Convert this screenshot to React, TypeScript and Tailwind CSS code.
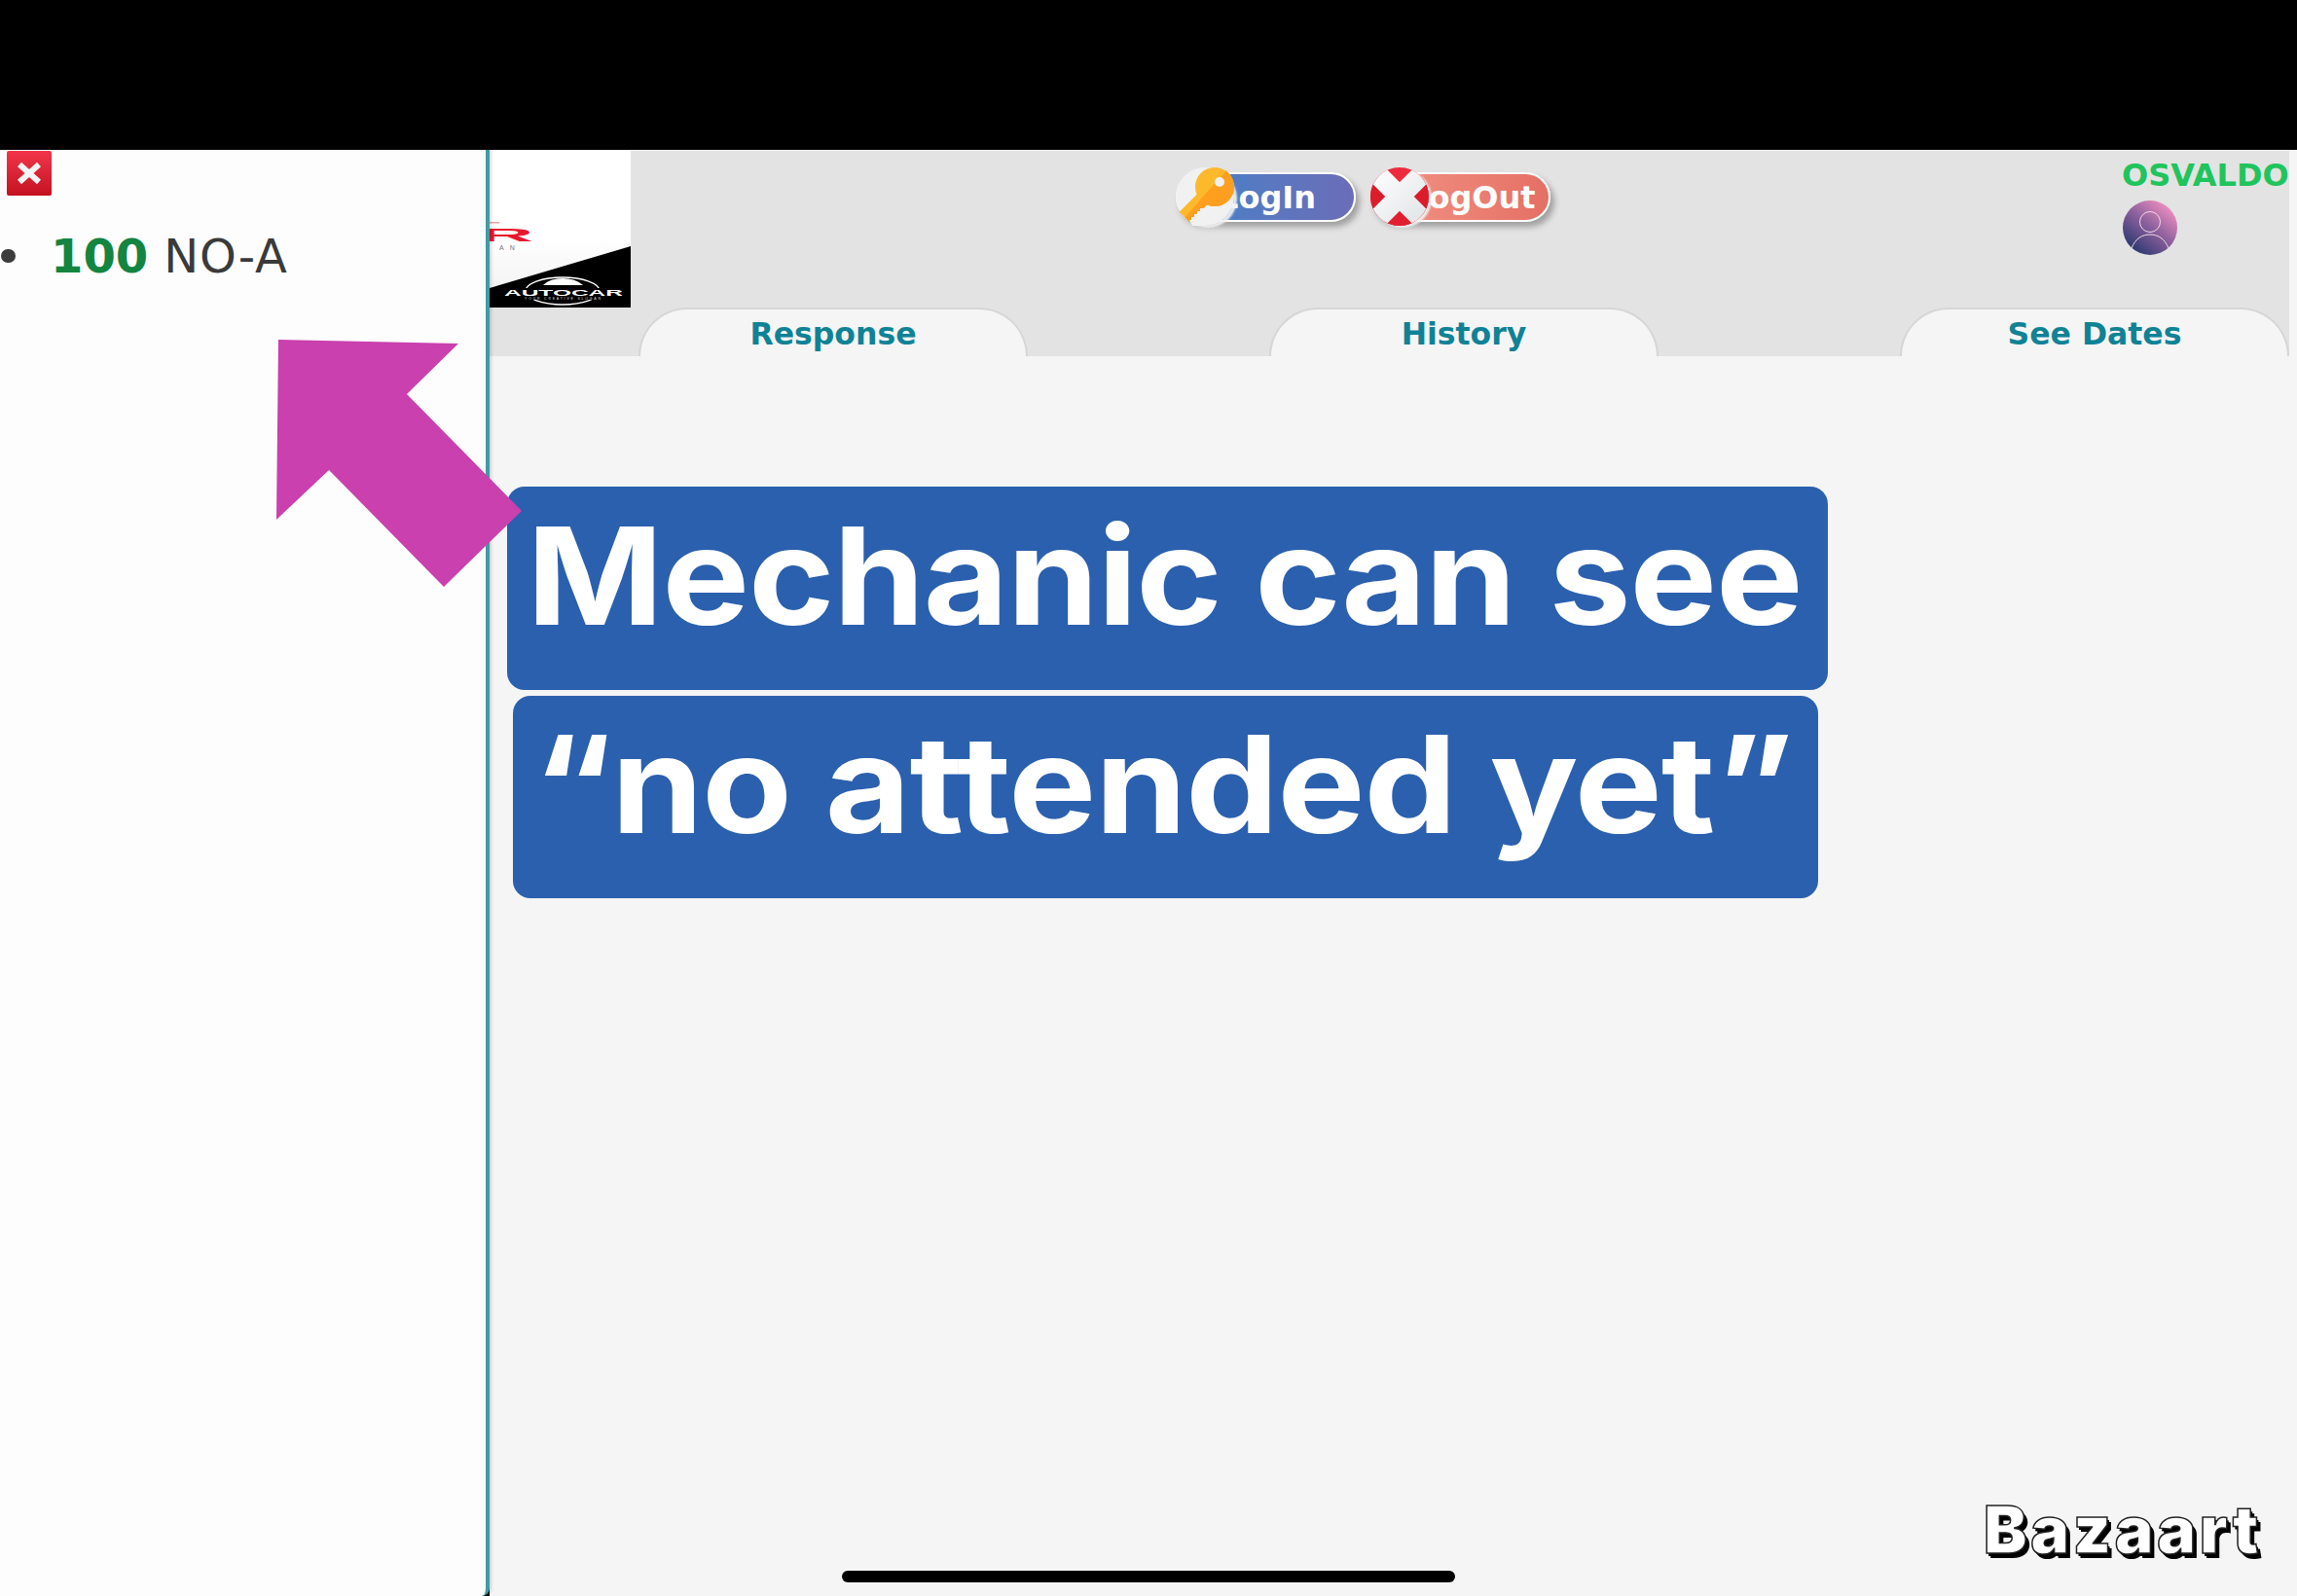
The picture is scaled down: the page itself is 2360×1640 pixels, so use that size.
const dejavu = "font-['DejaVu_Sans',sans-serif]";

const KeyIcon = () => (
  <svg viewBox="0 0 60 60" className="w-[60px] h-[60px]">
    <defs>
      <clipPath id="keyLower">
        <polygon points="60,-6 60,60 0,60 0,62" />
      </clipPath>
    </defs>
    <circle cx="30" cy="30" r="30" fill="#f1f1f1" />
    <g>
      <circle cx="40" cy="20" r="20" fill="#fdb92c" />
      <path d="M32 28 L9 51" stroke="#fdb92c" strokeWidth="15" />
    </g>
    <g clipPath="url(#keyLower)">
      <circle cx="40" cy="20" r="20" fill="#ff9f1f" />
      <path d="M32 28 L9 51" stroke="#ff9f1f" strokeWidth="15" />
    </g>
    <path d="M28 42 L25 42 L25 45 L22 45 L22 48 L19 48 L19 51 L16 51 L16 54 L14 54 L17 60 L30 60 L30 42 Z" fill="#f1f1f1" />
    <circle cx="45" cy="15" r="5" fill="#f1f1f1" />
  </svg>
);

const CrossIcon = () => (
  <svg viewBox="0 0 60 60" className="w-[60px] h-[60px]">
    <defs>
      <linearGradient id="crossShade" x1="0" y1="0" x2="1" y2="1">
        <stop offset="0" stopColor="#ffffff" />
        <stop offset="1" stopColor="#dfe3e6" />
      </linearGradient>
      <clipPath id="crossClip">
        <circle cx="30" cy="30" r="30" />
      </clipPath>
    </defs>
    <g clipPath="url(#crossClip)">
      <rect width="60" height="60" fill="#ee2b3d" />
      <path d="M0 0 L30 30 L0 60 Z M60 0 L30 30 L60 60 Z" fill="#db1c2b" />
      <path d="M30 30 L10 60 L50 60 Z" fill="#e0202e" />
      <path d="M0 0 L60 60 M60 0 L0 60" stroke="url(#crossShade)" strokeWidth="21" />
    </g>
  </svg>
);

const AuthPill = ({ label, icon, pill }: { label: string; icon: React.ReactNode; pill: string }) => (
  <div className="relative h-[60px] w-[185px] flex items-center">
    <div className={`w-full h-[51px] rounded-full border-2 border-white shadow-[4px_5px_6px_rgba(0,0,0,0.3)] flex items-center pt-[1px] text-white text-[32px] font-bold ${dejavu} ${pill}`}>
      {label}
    </div>
    <div className="absolute left-0 top-0 rounded-full shadow-[3px_2px_2px_rgba(240,240,240,0.95)]">{icon}</div>
  </div>
);

const Tab = ({ label }: { label: string }) => (
  <div className={`w-[400px] h-[50px] rounded-t-[60px] border-t-2 border-x-2 border-[#d6d6d6] bg-[#f5f5f5] flex justify-center pt-[5px] text-[31.5px] leading-[40px] font-bold text-[#108296] ${dejavu}`}>
    {label}
  </div>
);

const Logo = () => (
  <svg viewBox="0 0 145 161" className="w-[145px] h-[161px] shrink-0 bg-white">
    <defs>
      <linearGradient id="logoFade" x1="0" y1="0" x2="0" y2="1">
        <stop offset="0.55" stopColor="#ffffff" />
        <stop offset="1" stopColor="#efefef" />
      </linearGradient>
    </defs>
    <rect width="145" height="161" fill="url(#logoFade)" />
    <rect x="0" y="73" width="10" height="1.5" fill="#f3a0a6" />
    <text transform="translate(-12 93) scale(4.4 1)" fontFamily="Liberation Sans" fontWeight="700" fontSize="18" fill="#e8192c">R</text>
    <text x="10" y="102" fontFamily="Liberation Sans" fontSize="7" fill="#777" letterSpacing="6">AN</text>
    <polygon points="0,141 145,98 145,161 0,161" fill="#000" />
    <ellipse cx="75" cy="144" rx="38" ry="14" fill="none" stroke="#fff" strokeWidth="1.5" />
    <path d="M55 138 Q62 131 75 131 Q88 131 96 138 Z" fill="#fff" />
    <rect x="14" y="141" width="124" height="12" fill="#000" />
    <text x="15" y="149" textLength="122" lengthAdjust="spacingAndGlyphs" fontFamily="Liberation Sans" fontWeight="700" fontSize="9" fill="#fff">AUTOCAR</text>
    <text x="36" y="153" textLength="78" fontFamily="Liberation Sans" fontSize="3.5" fill="#ddd">YOUR CREATIVE SLOGAN</text>
  </svg>
);

const Avatar = () => (
  <svg viewBox="0 0 56 56" className="w-[56px] h-[56px]">
    <defs>
      <linearGradient id="avatarFill" x1="0.85" y1="0.1" x2="0.2" y2="0.9">
        <stop offset="0" stopColor="#ee8fc0" />
        <stop offset="0.5" stopColor="#8a5f9c" />
        <stop offset="1" stopColor="#303a72" />
      </linearGradient>
    </defs>
    <circle cx="28" cy="28" r="28" fill="url(#avatarFill)" />
    <circle cx="28" cy="22" r="10.5" fill="none" stroke="#f3d8e8" strokeWidth="1" />
    <path d="M9 49 C13 39 20 35 28 35 C36 35 43 39 47 49" fill="none" stroke="#f3d8e8" strokeWidth="1" />
  </svg>
);

export default function App() {
  return (
    <div className="relative w-[2360px] h-[1640px] overflow-hidden bg-black flex flex-col">
      <div className="h-[154px] shrink-0 bg-black" />

      <div className="flex-1 flex min-h-0">
        <aside className="w-[503px] shrink-0 bg-[#fdfdfd] border-r-[4px] border-[#3f9ca6] rounded-br-[8px] shadow-[2px_0_3px_rgba(0,0,0,0.15)] z-10">
          <div className="pl-[7px] pt-[1px]">
            <button className="w-[46px] h-[46px] rounded-[2px] bg-gradient-to-b from-[#f2344a] to-[#c4101f] flex items-center justify-center">
              <svg viewBox="0 0 26 24" className="w-[26px] h-[24px]">
                <path d="M3 3 L23 21 M23 3 L3 21" stroke="#f4f4f4" strokeWidth="6" />
              </svg>
            </button>
          </div>
          <div className={`mt-[34px] h-[56px] flex items-center text-[48px] leading-[56px] text-[#3a3a3a] ${dejavu}`}>
            <span className="w-[15px] h-[14px] rounded-full bg-[#3c3c3c] ml-[1px]" />
            <span className="ml-[36px] font-bold text-[#148541]">100</span>
            <span className="ml-[16px] tracking-[0.8px]">NO-A</span>
          </div>
        </aside>

        <main className="flex-1 min-w-0 bg-[#f5f5f5] flex flex-col">
          <header className="h-[212px] shrink-0 flex bg-[#e3e3e3] border-t border-[#f2f2f2] border-r-[8px] border-r-[#f5f5f5]">
            <Logo />
            <div className="flex-1 pl-[8px] flex flex-col">
              <div className="h-[161px] flex">
                <div className="pl-[552px] pt-[17px] flex gap-[15px] h-fit">
                  <AuthPill label="LogIn" icon={<KeyIcon />} pill="pl-[42px] bg-gradient-to-r from-[#3d82c8] to-[#6b6db8]" />
                  <AuthPill label="LogOut" icon={<CrossIcon />} pill="pl-[37px] bg-gradient-to-r from-[#f19585] to-[#e56f65]" />
                </div>
                <div className="ml-auto w-[172px] pt-[6px]">
                  <div className={`text-[32px] leading-[38px] font-bold text-[#20c45c] whitespace-nowrap ${dejavu}`}>OSVALDO</div>
                  <div className="mt-[7px] ml-[1px]">
                    <Avatar />
                  </div>
                </div>
              </div>
              <div className="flex justify-between">
                <Tab label="Response" />
                <Tab label="History" />
                <Tab label="See Dates" />
              </div>
            </div>
          </header>

          <div className="pt-[134px] pl-[18px] flex flex-col items-start gap-[6px] font-['Inter',sans-serif] font-bold text-white">
            <div className="w-[1357px] h-[209px] rounded-[18px] bg-[#2b60ae] flex justify-center pr-[6px] pt-[12px] text-[139px] leading-[160px] tracking-[-1px] whitespace-nowrap">
              <span className="inline-block scale-x-[1.082]">Mechanic can see</span>
            </div>
            <div className="ml-[6px] w-[1341px] h-[208px] rounded-[18px] bg-[#2b60ae] flex justify-center pr-[6px] pt-[11px] text-[139px] leading-[160px] tracking-[-1px] whitespace-nowrap">
              <span className="inline-block scale-x-[1.088]">“no attended yet”</span>
            </div>
          </div>
        </main>
      </div>

      {/* overlays from the video editor */}
      <svg className="absolute left-0 top-0 z-20 pointer-events-none" width="600" height="620" viewBox="0 0 600 620">
        <polygon points="286,349 471,353 418,405 536,525 456,603 338,483 284,534" fill="#c940ae" />
      </svg>
      <div className="absolute left-[2038px] top-[1532px] z-20 font-['Inter',sans-serif] font-black text-[67px] leading-[80px] text-white tracking-[3.5px] [-webkit-text-stroke:1.5px_#222] [text-shadow:2px_3px_0_#000,4px_5px_0_#000]">
        Bazaart
      </div>
      <div className="absolute left-[865px] top-[1614px] z-20 w-[630px] h-[12px] rounded-full bg-black" />
    </div>
  );
}
